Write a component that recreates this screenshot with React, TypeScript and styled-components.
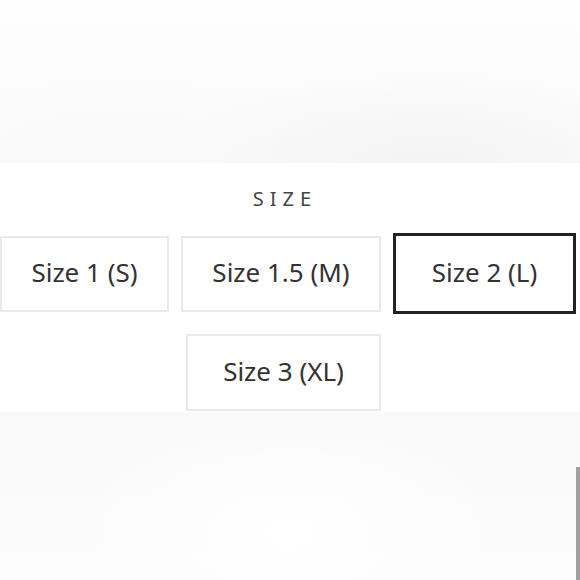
import styled, { createGlobalStyle } from "styled-components";

const GlobalStyle = createGlobalStyle`
  html, body {
    margin: 0;
    padding: 0;
    background: #ffffff;
    overflow: hidden;
  }
  body {
    font-family: "Noto Sans", "Open Sans", sans-serif;
  }
`;

const sizes = [
  { label: "Size 1 (S)", selected: false },
  { label: "Size 1.5 (M)", selected: false },
  { label: "Size 2 (L)", selected: true },
  { label: "Size 3 (XL)", selected: false },
];

const App = () => {
  return (
    <>
      <GlobalStyle />
      <Page>
        <TopBackdrop />
        <Panel>
          <Title>Size</Title>
          <SizeGrid>
            {sizes.map((size) => (
              <SizeButton key={size.label} $selected={size.selected}>
                {size.label}
              </SizeButton>
            ))}
          </SizeGrid>
        </Panel>
        <BottomBackdrop>
          <ScrollThumb />
        </BottomBackdrop>
      </Page>
    </>
  );
};

const Page = styled.div`
  width: 580px;
  height: 580px;
  display: flex;
  flex-direction: column;
  overflow: hidden;
`;

const TopBackdrop = styled.div`
  height: 163px;
  flex-shrink: 0;
  background:
    radial-gradient(ellipse 260px 110px at 430px 170px, #f3f3f3 0%, rgba(243, 243, 243, 0) 100%),
    radial-gradient(ellipse 300px 120px at 120px 170px, #f9f9f9 0%, rgba(249, 249, 249, 0) 100%),
    linear-gradient(180deg, #fefefe 0%, #fbfbfb 100%);
`;

const Panel = styled.div`
  height: 249px;
  flex-shrink: 0;
  background: #ffffff;
  box-sizing: border-box;
  padding-top: 22px;
  display: flex;
  flex-direction: column;
  align-items: center;
`;

const Title = styled.div`
  font-size: 20px;
  line-height: 28px;
  letter-spacing: 6px;
  text-transform: uppercase;
  color: #444444;
  padding-right: 10px;
  margin-bottom: 23px;
`;

const SizeGrid = styled.div`
  align-self: flex-start;
  display: grid;
  grid-template-columns: 169px 200px 183px;
  column-gap: 12px;
  row-gap: 22px;
  align-items: start;

  & > :nth-child(4) {
    grid-column: 2;
    justify-self: end;
    width: 195px;
    height: 77px;
  }
`;

const SizeButton = styled.div<{ $selected: boolean }>`
  box-sizing: border-box;
  height: ${(p) => (p.$selected ? "81px" : "76px")};
  margin: ${(p) => (p.$selected ? "-3px 0 -2px" : "0")};
  padding-bottom: 4px;
  border: ${(p) => (p.$selected ? "3px solid #222222" : "2px solid #e9e9e7")};
  background: #ffffff;
  display: flex;
  align-items: center;
  justify-content: center;
  font-size: 26px;
  color: #333333;
  white-space: nowrap;
`;

const BottomBackdrop = styled.div`
  flex: 1;
  display: flex;
  justify-content: flex-end;
  align-items: flex-end;
  background:
    radial-gradient(ellipse 220px 120px at 290px 120px, #ffffff 0%, rgba(255, 255, 255, 0) 100%),
    linear-gradient(180deg, #f9f9f9 0%, #fcfcfc 100%);
`;

const ScrollThumb = styled.div`
  width: 4px;
  height: 113px;
  background: #a0a0a0;
`;

export default App;
